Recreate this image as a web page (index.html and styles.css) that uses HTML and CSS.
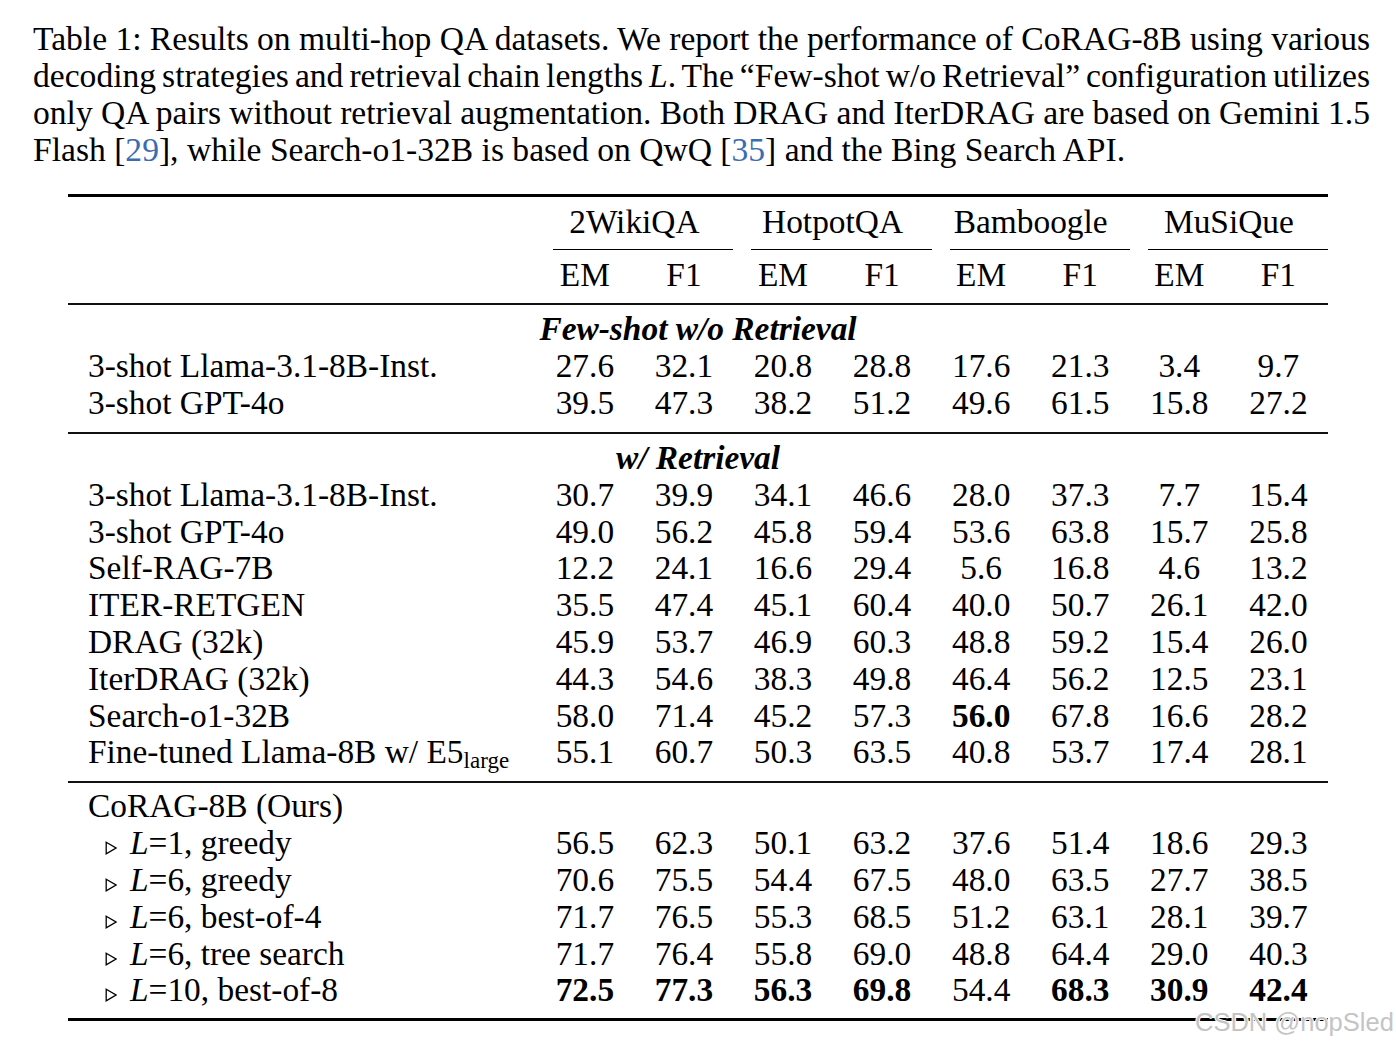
FILE: index.html
```html
<!DOCTYPE html>
<html>
<head>
<meta charset="utf-8">
<title>Table 1</title>
<link rel="stylesheet" href="styles.css">
</head>
<body>
<div class="page">
  <p class="caption">
    <span class="cl">Table 1: Results on multi-hop QA datasets. We report the performance of CoRAG-8B using various</span>
    <span class="cl">decoding strategies and retrieval chain lengths <i>L</i>. The “Few-shot w/o Retrieval” configuration utilizes</span>
    <span class="cl">only QA pairs without retrieval augmentation. Both DRAG and IterDRAG are based on Gemini 1.5</span>
    <span class="cl last">Flash [<a class="ref">29</a>], while Search-o1-32B is based on QwQ [<a class="ref">35</a>] and the Bing Search API.</span>
  </p>

  <table class="results">
    <colgroup>
      <col class="c-name">
      <col class="c-num"><col class="c-num"><col class="c-num"><col class="c-num">
      <col class="c-num"><col class="c-num"><col class="c-num"><col class="c-num">
    </colgroup>
    <thead>
      <tr class="r-top">
        <th></th>
        <th colspan="2" class="grp">2WikiQA</th>
        <th colspan="2" class="grp">HotpotQA</th>
        <th colspan="2" class="grp">Bamboogle</th>
        <th colspan="2" class="grp">MuSiQue</th>
      </tr>
      <tr class="r-sub">
        <th></th>
        <th>EM</th><th>F1</th><th>EM</th><th>F1</th><th>EM</th><th>F1</th><th>EM</th><th>F1</th>
      </tr>
    </thead>
    <tbody>
      <tr><td colspan="9" class="sec">Few-shot w/o Retrieval</td></tr>
      <tr><td class="name">3-shot Llama-3.1-8B-Inst.</td><td>27.6</td><td>32.1</td><td>20.8</td><td>28.8</td><td>17.6</td><td>21.3</td><td>3.4</td><td>9.7</td></tr>
      <tr><td class="name">3-shot GPT-4o</td><td>39.5</td><td>47.3</td><td>38.2</td><td>51.2</td><td>49.6</td><td>61.5</td><td>15.8</td><td>27.2</td></tr>
    </tbody>
    <tbody>
      <tr><td colspan="9" class="sec">w/ Retrieval</td></tr>
      <tr><td class="name">3-shot Llama-3.1-8B-Inst.</td><td>30.7</td><td>39.9</td><td>34.1</td><td>46.6</td><td>28.0</td><td>37.3</td><td>7.7</td><td>15.4</td></tr>
      <tr><td class="name">3-shot GPT-4o</td><td>49.0</td><td>56.2</td><td>45.8</td><td>59.4</td><td>53.6</td><td>63.8</td><td>15.7</td><td>25.8</td></tr>
      <tr><td class="name">Self-RAG-7B</td><td>12.2</td><td>24.1</td><td>16.6</td><td>29.4</td><td>5.6</td><td>16.8</td><td>4.6</td><td>13.2</td></tr>
      <tr><td class="name">ITER-RETGEN</td><td>35.5</td><td>47.4</td><td>45.1</td><td>60.4</td><td>40.0</td><td>50.7</td><td>26.1</td><td>42.0</td></tr>
      <tr><td class="name">DRAG (32k)</td><td>45.9</td><td>53.7</td><td>46.9</td><td>60.3</td><td>48.8</td><td>59.2</td><td>15.4</td><td>26.0</td></tr>
      <tr><td class="name">IterDRAG (32k)</td><td>44.3</td><td>54.6</td><td>38.3</td><td>49.8</td><td>46.4</td><td>56.2</td><td>12.5</td><td>23.1</td></tr>
      <tr><td class="name">Search-o1-32B</td><td>58.0</td><td>71.4</td><td>45.2</td><td>57.3</td><td class="b">56.0</td><td>67.8</td><td>16.6</td><td>28.2</td></tr>
      <tr><td class="name">Fine-tuned Llama-8B w/ E5<sub>large</sub></td><td>55.1</td><td>60.7</td><td>50.3</td><td>63.5</td><td>40.8</td><td>53.7</td><td>17.4</td><td>28.1</td></tr>
    </tbody>
    <tbody>
      <tr><td class="name">CoRAG-8B (Ours)</td><td></td><td></td><td></td><td></td><td></td><td></td><td></td><td></td></tr>
      <tr><td class="name"><svg class="tri" width="12" height="14" viewBox="0 0 12 14"><path d="M1.2 1.2 L11 7 L1.2 12.8 Z" fill="none" stroke="#000" stroke-width="1.3"/></svg><i>L</i>=1, greedy</td><td>56.5</td><td>62.3</td><td>50.1</td><td>63.2</td><td>37.6</td><td>51.4</td><td>18.6</td><td>29.3</td></tr>
      <tr><td class="name"><svg class="tri" width="12" height="14" viewBox="0 0 12 14"><path d="M1.2 1.2 L11 7 L1.2 12.8 Z" fill="none" stroke="#000" stroke-width="1.3"/></svg><i>L</i>=6, greedy</td><td>70.6</td><td>75.5</td><td>54.4</td><td>67.5</td><td>48.0</td><td>63.5</td><td>27.7</td><td>38.5</td></tr>
      <tr><td class="name"><svg class="tri" width="12" height="14" viewBox="0 0 12 14"><path d="M1.2 1.2 L11 7 L1.2 12.8 Z" fill="none" stroke="#000" stroke-width="1.3"/></svg><i>L</i>=6, best-of-4</td><td>71.7</td><td>76.5</td><td>55.3</td><td>68.5</td><td>51.2</td><td>63.1</td><td>28.1</td><td>39.7</td></tr>
      <tr><td class="name"><svg class="tri" width="12" height="14" viewBox="0 0 12 14"><path d="M1.2 1.2 L11 7 L1.2 12.8 Z" fill="none" stroke="#000" stroke-width="1.3"/></svg><i>L</i>=6, tree search</td><td>71.7</td><td>76.4</td><td>55.8</td><td>69.0</td><td>48.8</td><td>64.4</td><td>29.0</td><td>40.3</td></tr>
      <tr><td class="name"><svg class="tri" width="12" height="14" viewBox="0 0 12 14"><path d="M1.2 1.2 L11 7 L1.2 12.8 Z" fill="none" stroke="#000" stroke-width="1.3"/></svg><i>L</i>=10, best-of-8</td><td class="b">72.5</td><td class="b">77.3</td><td class="b">56.3</td><td class="b">69.8</td><td>54.4</td><td class="b">68.3</td><td class="b">30.9</td><td class="b">42.4</td></tr>
    </tbody>
  </table>

  <div class="watermark">CSDN @nopSled</div>
</div>
</body>
</html>
```

FILE: styles.css
```css
html, body {
  margin: 0;
  padding: 0;
  background: #ffffff;
}

body {
  color: #000000;
  font-family: "Liberation Serif", "Times New Roman", serif;
}

.page {
  position: relative;
  width: 1396px;
  height: 1046px;
  overflow: hidden;
}

.caption {
  margin: 0;
  padding: 20px 0 0 33px;
  width: 1337px;
  font-size: 33.6px;
  line-height: 37px;
}

.cl {
  display: block;
  white-space: nowrap;
  word-spacing: -4px;
  text-align: justify;
  text-align-last: justify;
}

.cl.last {
  word-spacing: 0;
  text-align: left;
  text-align-last: left;
}

.ref {
  color: #3b6cb0;
  text-decoration: none;
}

.results {
  margin: 26px 0 0 68px;
  width: 1260px;
  table-layout: fixed;
  border-collapse: separate;
  border-spacing: 0;
  font-size: 33.4px;
  line-height: 36.8px;
}

.c-name { width: 467px; }
.c-num { width: 99px; }

.results th,
.results td {
  padding: 0;
  font-weight: normal;
  text-align: center;
  white-space: nowrap;
}

.results td.name {
  text-align: left;
  padding-left: 20px;
}

.r-top th {
  border-top: 3px solid #000;
  padding-top: 7px;
  padding-bottom: 9.2px;
}

.results th.grp {
  background: linear-gradient(#000, #000) no-repeat right bottom / calc(100% - 18px) 1px;
}

.r-sub th {
  padding-top: 7px;
  padding-bottom: 9.2px;
}

.results tbody tr:first-child td {
  border-top: 2px solid #111;
  padding-top: 6.5px;
}

.results tbody tr:last-child td {
  padding-bottom: 9.7px;
}

.results tbody:last-child tr:first-child td {
  padding-top: 5.5px;
}

.results tbody:last-child tr:last-child td {
  padding-bottom: 9px;
  border-bottom: 3px solid #000;
}

.results td.sec {
  font-weight: bold;
  font-style: italic;
}

.results td.b {
  font-weight: bold;
}

.results sub {
  font-size: 23px;
  line-height: 0;
  vertical-align: -5px;
}

.tri {
  margin-left: 17px;
  margin-right: 13px;
  vertical-align: -1px;
}

.watermark {
  position: absolute;
  left: 1195px;
  top: 1010px;
  font-family: "Liberation Sans", Arial, sans-serif;
  font-size: 25.5px;
  line-height: 1;
  color: #c4c4c4;
  text-shadow: 1px 0 #fff, -1px 0 #fff, 0 1px #fff, 0 -1px #fff;
  white-space: nowrap;
}
```
